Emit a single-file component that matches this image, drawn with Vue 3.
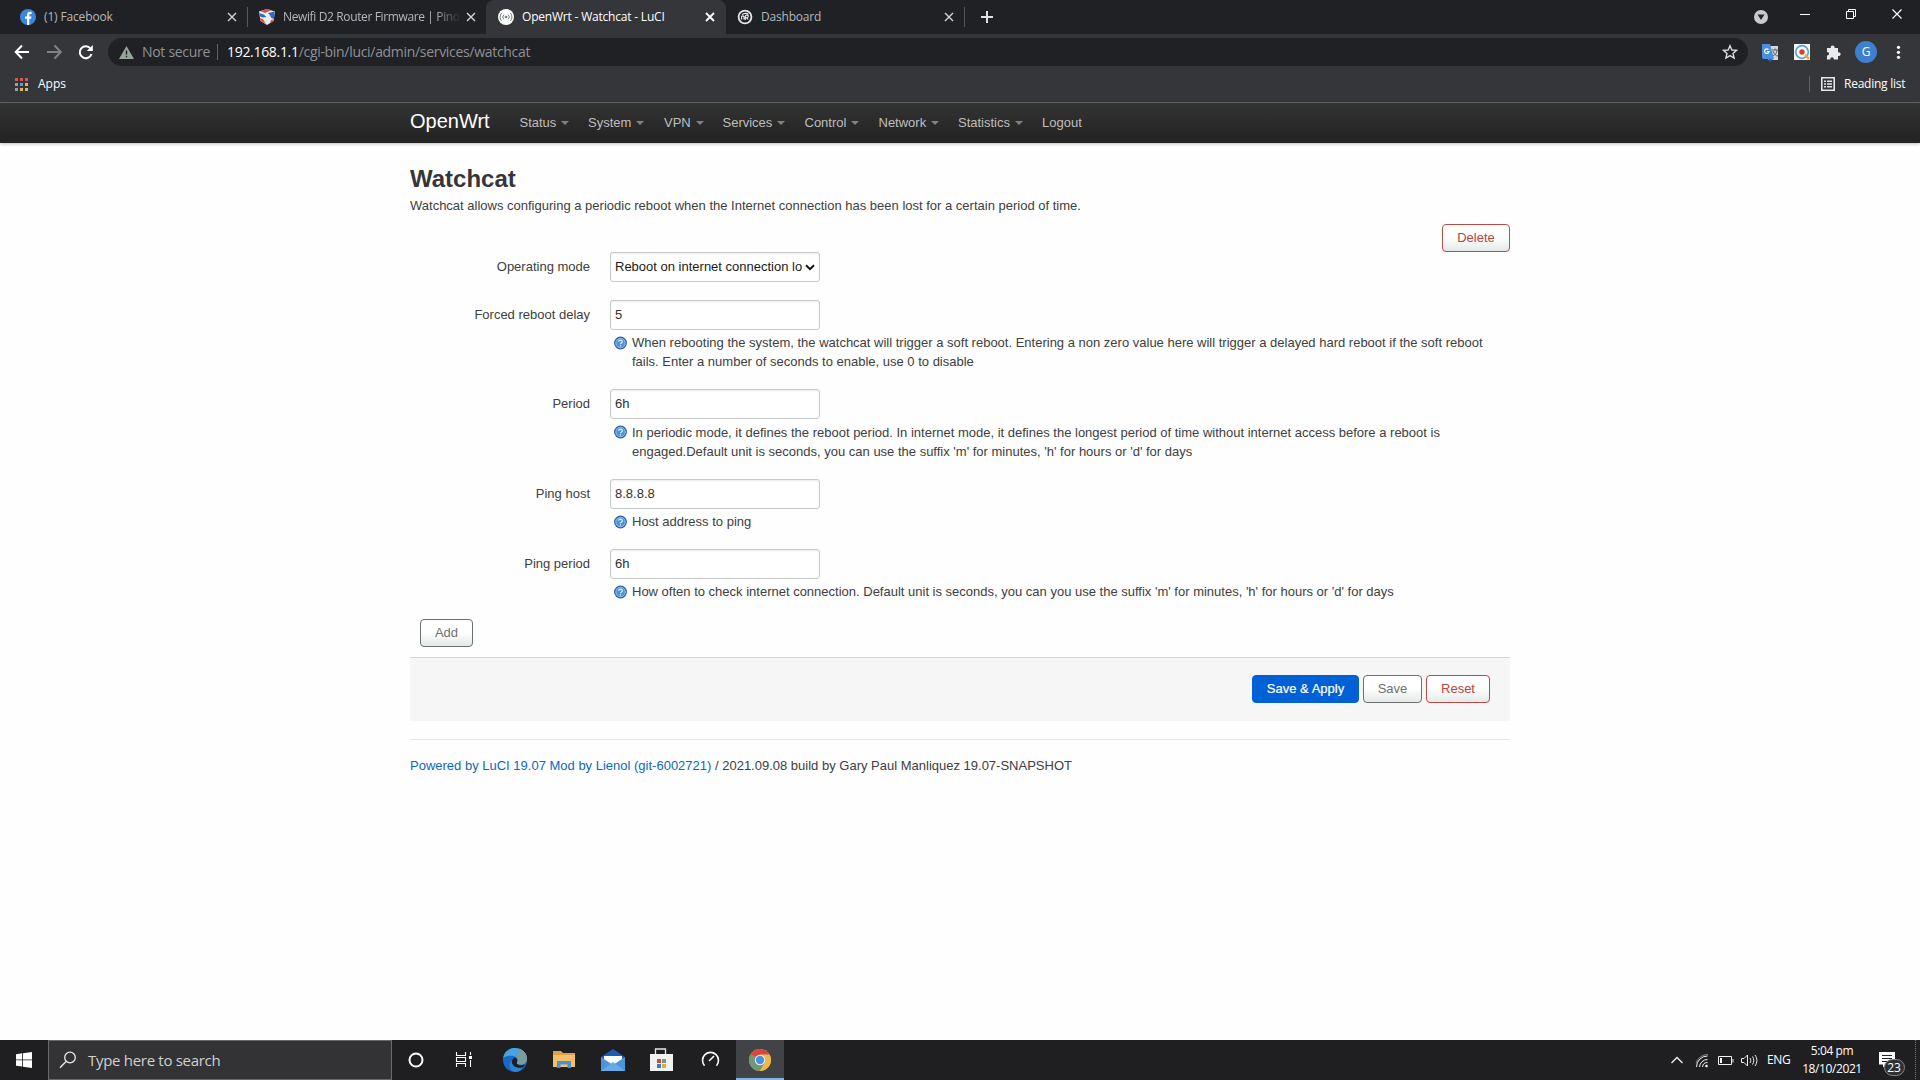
<script setup>
const nav = [
  { label: 'Status', width: 68.5 },
  { label: 'System', width: 76 },
  { label: 'VPN', width: 58.5 },
  { label: 'Services', width: 82 },
  { label: 'Control', width: 74 },
  { label: 'Network', width: 79.5 },
  { label: 'Statistics', width: 84 },
  { label: 'Logout', width: 60, plain: true },
]
const fields = [
  { label: 'Operating mode', value: 'Reboot on internet connection lo', select: true, help: [] },
  {
    label: 'Forced reboot delay', value: '5', help: [
      'When rebooting the system, the watchcat will trigger a soft reboot. Entering a non zero value here will trigger a delayed hard reboot if the soft reboot',
      'fails. Enter a number of seconds to enable, use 0 to disable'],
  },
  {
    label: 'Period', value: '6h', help: [
      'In periodic mode, it defines the reboot period. In internet mode, it defines the longest period of time without internet access before a reboot is',
      "engaged.Default unit is seconds, you can use the suffix 'm' for minutes, 'h' for hours or 'd' for days"],
  },
  { label: 'Ping host', value: '8.8.8.8', help: ['Host address to ping'] },
  {
    label: 'Ping period', value: '6h', help: [
      "How often to check internet connection. Default unit is seconds, you can you use the suffix 'm' for minutes, 'h' for hours or 'd' for days"],
  },
]
const appDots = ['#d8574e', '#d8574e', '#d8574e', '#9aa09c', '#5a9be0', '#e3b457', '#9aa09c', '#e3b457', '#e3b457']
</script>

<template>
  <div class="screen">
    <header class="chrome">
      <div class="tabs">
        <div class="tab t1">
          <svg class="fav" viewBox="0 0 16 16"><circle cx="8" cy="8" r="8" fill="#3b86e0" /><path d="M7 16V9.800H5V7.500h2V6c0-2.100 1.200-3.200 3-3.200l1.600.1v2h-1c-1 0-1.300.5-1.300 1.200v1.400h2.200l-.4 2.300H9.300V16z" fill="#fff" /></svg>
          <span class="tt s1">(1) Facebook</span>
          <svg class="x" viewBox="0 0 10 10"><path d="M1 1l8 8M9 1l-8 8" /></svg>
          <i class="sep"></i>
        </div>
        <div class="tab t2">
          <svg class="fav" viewBox="0 0 16 16"><path d="M0 2.500L8 0l8 2.500-1.500 9.500L8 16l-6.500-4z" fill="#eceef2" /><path d="M1.500 2.200L8 0l4 1.200L6 4z" fill="#d84c43" /><path d="M9 4l6.800-1.400L14.800 10l-2.600-1-1-2.500z" fill="#2f6ac6" /><path d="M.3 4l4.500 1.500L7.500 8 4 8.500l-3-1z" fill="#2f6ac6" /><path d="M1 9l3 1 3 5.300-5.500-3.300z" fill="#d8554c" /><path d="M12 11l2.300-.5-.5 2-2.800 1.700z" fill="#d8554c" /></svg>
          <span class="tt s2 fade">Newifi D2 Router Firmware | Pino</span>
          <svg class="x" viewBox="0 0 10 10"><path d="M1 1l8 8M9 1l-8 8" /></svg>
        </div>
        <div class="tab t3">
          <svg class="fav" viewBox="0 0 16 16"><circle cx="8" cy="8" r="8" fill="#fff" /><circle cx="8" cy="8" r="1.300" fill="#6d7f78" /><path d="M5.800 5.700a3.300 3.300 0 000 4.600M10.200 5.700a3.300 3.300 0 010 4.600M3.700 4a5.700 5.700 0 000 8M12.300 4a5.700 5.700 0 010 8" fill="none" stroke="#6d7f78" stroke-width="1" /></svg>
          <span class="tt s3">OpenWrt - Watchcat - LuCI</span>
          <svg class="x" viewBox="0 0 10 10"><path d="M1 1l8 8M9 1l-8 8" /></svg>
        </div>
        <div class="tab t4">
          <svg class="fav" viewBox="0 0 16 16"><circle cx="8" cy="8" r="6.400" fill="none" stroke="#e6e7e8" stroke-width="1.800" /><path d="M4.600 10.500V8c0-1.600 2.400-1.600 2.400 0v2.500M8.300 11V7.500c0-2 3.200-1.600 3 0-.2 1.200-1.500 1.300-2.500 1.200 1.500.3 2 .9 2.300 1.800M5 5.700C7 4 10 3.800 11.500 5.300" fill="none" stroke="#e6e7e8" stroke-width="1.200" /></svg>
          <span class="tt s4">Dashboard</span>
          <svg class="x" viewBox="0 0 10 10"><path d="M1 1l8 8M9 1l-8 8" /></svg>
          <i class="sep"></i>
        </div>
        <svg class="plus" viewBox="0 0 12 12"><path d="M6 0v12M0 6h12" stroke="#dfe1e5" stroke-width="2" /></svg>
        <svg class="winctl" viewBox="0 0 160 34">
          <circle cx="11" cy="17" r="7" fill="#c9cacc" /><path d="M7.500 14.500h7L11 20z" fill="#26272a" />
          <g fill="none" stroke="#fff"><path d="M50 14.500h10M96.500 11.500h7v7h-7zM98.500 11.500v-2h7v7h-2" /><path d="M142.500 9.500l9 9M151.500 9.500l-9 9" stroke-width="1.200" /></g>
        </svg>
      </div>

      <div class="toolbar">
        <svg class="navicons" viewBox="0 0 108 28" fill="none" stroke-width="2">
          <path d="M29 14H16M22 7.500L15.700 14l6.300 6.500" stroke="#fff" />
          <path d="M47 14h13M54.500 7.500l6.300 6.500-6.300 6.500" stroke="#808286" />
          <path d="M90.500 10.500A6 6 0 1091.500 16" stroke="#fff" /><path d="M92.800 7v6h-6z" fill="#fff" />
        </svg>
        <div class="omni">
          <svg class="warn" viewBox="0 0 15 13"><path d="M7.500 0L15 13H0z" fill="#94a697" /><path d="M7.500 4.500v4M7.500 9.800v1.500" stroke="#202124" stroke-width="1.400" /></svg>
          <span class="ns">Not secure</span><i class="osep"></i>
          <span class="url"><b>192.168.1.1</b>/cgi-bin/luci/admin/services/watchcat</span>
          <svg class="star" viewBox="0 0 16 16"><path d="M8 1.700l1.900 4.300 4.600.4-3.500 3 1.100 4.600L8 11.600 3.900 14 5 9.400l-3.500-3 4.600-.4z" fill="none" stroke="#dadce0" stroke-width="1.400" /></svg>
        </div>
        <svg class="exts" viewBox="0 0 172 28">
          <path d="M21 8h9v14H20z" fill="#d5d8da" /><path d="M14 6h8l4 15H16a2 2 0 01-2-2z" fill="#4a90e2" /><path d="M20 21h5l-3 3z" fill="#2d62b8" /><path d="M24 12h6M27 10.500V12M25 13c1 3 3 5 5 5M29 12c0 3-2 5-4 6" stroke="#5a6067" fill="none" /><path d="M20.500 11.500a2.300 2.300 0 10.600 2H19" stroke="#fff" stroke-width="1.200" fill="none" />
          <rect x="46" y="6" width="16" height="16" fill="#f6f8f9" /><circle cx="54" cy="14" r="6.300" fill="none" stroke="#5aa2dc" stroke-width="1.700" /><circle cx="54" cy="14" r="2.700" fill="#d8412f" /><path d="M57 17l4 4" stroke="#edaa3c" stroke-width="2.500" />
          <path d="M79 10h3.800c-.6-3 4-3.400 3.800 0H90v4.200c3.600-.2 3.600 4 0 3.800V21.500h-4.200c.2-3-3.700-3-3.500 0H79v-4c2.800 0 2.800-3.500 0-3.500z" fill="#e8eaed" />
          <circle cx="118" cy="14" r="11" fill="#3f7fd0" /><text x="118" y="18.200" text-anchor="middle" class="avatar">G</text>
          <g fill="#fff"><circle cx="150.500" cy="9.300" r="1.600" /><circle cx="150.500" cy="14.300" r="1.600" /><circle cx="150.500" cy="19.300" r="1.600" /></g>
        </svg>
      </div>

      <div class="bookmarks">
        <div class="apps"><i v-for="(c, i) in appDots" :key="i" :style="{ background: c }"></i></div>
        <span class="appst">Apps</span>
        <i class="rsep"></i>
        <svg class="rl" viewBox="0 0 14 14"><path d="M.8.8h12.400v12.400H.8z" fill="none" stroke="#e3e6e4" stroke-width="1.600" /><path d="M3 4.200h2M6 4.200h5M3 7h2M6 7h5M3 9.800h2M6 9.800h5" stroke="#e3e6e4" stroke-width="1.400" /></svg>
        <span class="rlt">Reading list</span>
      </div>
    </header>

    <nav class="lucinav">
      <span class="brand">OpenWrt</span>
      <span v-for="n in nav" :key="n.label" class="item" :style="{ width: n.width + 'px' }">{{ n.label }}<i v-if="!n.plain" class="caret"></i></span>
    </nav>

    <main class="page">
      <h2>Watchcat</h2>
      <p class="desc">Watchcat allows configuring a periodic reboot when the Internet connection has been lost for a certain period of time.</p>
      <div class="del"><button class="btn red w68">Delete</button></div>
      <div class="form">
        <div v-for="(f, i) in fields" :key="i" class="row" :class="'r' + i">
          <label>{{ f.label }}</label>
          <div class="ctl">
            <div class="inp"><span>{{ f.value }}</span>
              <svg v-if="f.select" viewBox="0 0 10 7"><path d="M1 1.200l4 4 4-4" fill="none" stroke="#111" stroke-width="2" /></svg>
            </div>
            <div v-if="f.help.length" class="help">
              <svg viewBox="0 0 14 14"><circle cx="7" cy="7" r="6.300" fill="#4d93d9" stroke="#2c5f9e" stroke-width="1.200" /><circle cx="7" cy="7" r="5" fill="none" stroke="#9fc9ee" stroke-width=".8" /><path d="M5 5.600C5 3.400 9 3.400 9 5.600 9 7 7 6.800 7 8.300M7 9.400v1.300" fill="none" stroke="#e6f2fc" stroke-width="1.200" /></svg>
              <div class="lines"><div v-for="l in f.help" :key="l" class="line">{{ l }}</div></div>
            </div>
          </div>
        </div>
      </div>
      <button class="btn gray w53 add">Add</button>
      <div class="actions">
        <button class="btn blue w107">Save &amp; Apply</button>
        <button class="btn gray w59">Save</button>
        <button class="btn red w64">Reset</button>
      </div>
      <footer><a>Powered by LuCI 19.07 Mod by Lienol (git-6002721)</a> / 2021.09.08 build by Gary Paul Manliquez 19.07-SNAPSHOT</footer>
    </main>

    <div class="taskbar">
      <svg class="start" viewBox="0 0 48 40"><path d="M16 14.200l6.200-.9v6.200H16zM23 13.200l9-1.200v7.500h-9zM16 20.300h6.200v6.300l-6.200-.9zM23 20.300h9V28l-9-1.200z" fill="#fff" /></svg>
      <div class="search">
        <svg viewBox="0 0 18 18"><circle cx="11" cy="6.500" r="5.300" fill="none" stroke="#e8e8e8" stroke-width="1.300" /><path d="M7 10.500L1 16.800" stroke="#e8e8e8" stroke-width="1.400" /></svg>
        <span>Type here to search</span>
      </div>
      <svg class="tasks" viewBox="0 0 344 40">
        <circle cx="24" cy="20" r="6.500" fill="none" stroke="#fff" stroke-width="2" />
        <g fill="none" stroke="#fff" stroke-width="1.100"><path d="M64.500 12v3.500h9V12M64.500 27v-3.500h9V27M64.500 17.500h9v4h-9zM78.500 12v3M78.500 20v7" /></g><path d="M77 16h3v3h-3z" fill="#fff" />
        <circle cx="123" cy="20" r="12" fill="#1769c7" /><path d="M111.200 18C112 11.500 117 8 123 8c7 0 12 5 12 10.500 0 4-3 6-6.500 6-2.500 0-4-.8-3.700-2 1.400-1.400 1.200-5-2.600-6.300-4-1.200-9 0-11 1.800z" fill="#4aa3df" /><path d="M129 9.600c4 2 6 5.400 6 8.900 0 4-3 6-6.500 6-2.500 0-4-.8-3.700-2 1.400-1.400 1.200-4 0-5.500 1-3 2-5 4.200-7.400z" fill="#7d9c99" /><path d="M124.800 22.500c-.6 2.500 4.500 4 8.200 1.800l-2 3.200c-7 2-12-2-11-6.500.5-2.300 2-3.200 3.500-3.500 2 1.200 2.300 3.600 1.300 5z" fill="#1f1f22" /><path d="M120 21c-.5 4 3 8 11 6.500-2 2.500-5 4.500-8 4.500-6-1.500-7.500-9-3-11z" fill="#2f83d6" />
        <path d="M161 11h8l2 2h12v14h-22z" fill="#e2a047" /><path d="M161 15h22v12h-22z" fill="#f3c06a" /><path d="M165 21h14v7h-3.500v-3.500h-7V28H165z" fill="#4a92d4" />
        <path d="M209 17l12-8 12 8v4h-24z" fill="#1c5cb8" /><path d="M212 16h18v8h-18z" fill="#fff" /><path d="M209 17l12 8 12-8v14h-24z" fill="#4a95dc" /><path d="M209 31l12-9 12 9z" fill="#67aae6" />
        <path d="M263.500 15v-6h10v6" fill="none" stroke="#e8e8e8" stroke-width="1.300" /><path d="M258 14h23v17h-23z" fill="#f0f1f1" /><path d="M265 19h4v4h-4z" fill="#c94a35" /><path d="M270 19h4v4h-4z" fill="#8c8f88" /><path d="M265 24h4v4h-4z" fill="#2d82c8" /><path d="M270 24h4v4h-4z" fill="#e6a83a" />
        <path d="M313.500 26.200a8 8 0 1112 0M318 21.500l5-5" fill="none" stroke="#fff" stroke-width="1.600" transform="translate(-1 -.5)" />
      </svg>
      <div class="chrometile">
        <svg viewBox="0 0 22 22"><circle cx="11" cy="11" r="11" fill="#efb64c" /><path d="M11 11L1.500 5.500A11 11 0 0120.500 5.500H11z" fill="#d8463c" /><path d="M1.500 5.500A11 11 0 0011 22l5-8.300L11 11z" fill="#6f9878" /><path d="M20.500 5.500A11 11 0 0111 22l4.800-8.200z" fill="#efb64c" /><circle cx="11" cy="11" r="5.200" fill="#f4f4f4" /><circle cx="11" cy="11" r="4.200" fill="#4a8fe2" /></svg>
      </div>
      <svg class="tray" viewBox="0 0 97 40" fill="none" stroke="#f0f0f0">
        <path d="M3.500 23l5.500-5.500 5.500 5.500" stroke-width="1.300" />
        <path d="M28.500 27a11 11 0 0111-11M31.500 27a8 8 0 018-7.500M34.500 27a5 5 0 015-4.500" /><path d="M28 23a13 13 0 0112-8.500" stroke="#888" /><circle cx="38.500" cy="26" r="1.300" fill="#fff" stroke="none" />
        <path d="M50.500 16.500h13v8h-13zM65 19v3.500" /><path d="M52 18h2v5h-2z" fill="#fff" stroke="none" />
        <path d="M73.500 18.500h2.500l3.500-3.500v11L76 22.500h-2.500zM82 18c1 1.500 1 3.500 0 5M84.500 16.500c1.700 2.500 1.700 5.500 0 8M87 15c2.500 3.500 2.500 7.500 0 11" />
      </svg>
      <span class="eng">ENG</span>
      <div class="clock"><span>5:04 pm</span><span>18/10/2021</span></div>
      <svg class="note" viewBox="0 0 48 40">
        <path d="M7 12h16v12.500h-9l-3 3v-3H7z" fill="#fff" /><path d="M10 15.500h10M10 18.500h10M10 21.500h6" stroke="#202124" stroke-width="1.200" />
        <rect x="12.500" y="19.500" width="20" height="16" rx="8" fill="#303033" stroke="#85868a" /><text x="22" y="31.500" text-anchor="middle" class="badge">23</text>
        <path d="M43.500 0v40" stroke="#77787b" stroke-dasharray="1 1" />
      </svg>
    </div>
  </div>
</template>

<style>
body { background: #fefefe; overflow: hidden; }
</style>

<style scoped>
.screen { width: 1920px; height: 1080px; display: flex; flex-direction: column; background: #fefefe; font: 13px/19px "Liberation Sans", Arial, sans-serif; color: #404040; overflow: hidden; }
svg { display: block; flex: none; }
i { display: block; flex: none; }
span { white-space: nowrap; }
.chrome, .taskbar { font-family: "Open Sans", "Noto Sans", sans-serif; }
.chrome { height: 102px; background: #35363a; border-bottom: 1px solid #626366; flex: none; }
.tabs { height: 34px; background: #202124; display: flex; align-items: center; font-size: 12px; color: #b4b7bc; }
.tab { height: 34px; display: flex; align-items: center; box-sizing: border-box; }
.t1 { width: 248px; padding-left: 20px; }
.t2 { width: 238px; padding-left: 11px; }
.t3 { width: 240px; padding-left: 12px; background: #35363a; border-radius: 8px 8px 0 0; color: #fff; }
.t4 { width: 239px; padding-left: 11px; }
.fav { width: 16px; height: 16px; margin-right: 8px; }
.tt { line-height: 18px; }
.t1 .tt { width: 183px; }
.t2 .tt { width: 176px; }
.t3 .tt { width: 183px; }
.t4 .tt { width: 184px; }
.t2 .x { margin-left: 7px; }
.s1 { letter-spacing: -.15px; }
.s2 { letter-spacing: -.37px; }
.s3 { letter-spacing: -.2px; }
.s4 { letter-spacing: -.2px; }
.fade { -webkit-mask-image: linear-gradient(90deg, #000 86%, rgba(0,0,0,.15) 99%); mask-image: linear-gradient(90deg, #000 86%, rgba(0,0,0,.15) 99%); }
.x { width: 10px; height: 10px; }
.x path { stroke: #d2d4d7; stroke-width: 1.400; }
.t3 .x path { stroke: #fff; stroke-width: 1.800; }
.sep { width: 1px; height: 20px; background: #55565a; margin-left: 10px; }
.plus { width: 12px; height: 12px; margin-left: 16px; }
.winctl { width: 160px; height: 34px; margin-left: auto; margin-right: 10px; }
.toolbar { height: 28px; margin-top: 4px; display: flex; }
.navicons { width: 108px; height: 28px; }
.omni { width: 1640px; height: 28px; border-radius: 14px; background: #202124; display: flex; align-items: center; font-size: 14px; color: #8e9195; box-sizing: border-box; padding-left: 11px; }
.warn { width: 15px; height: 13px; margin-right: 8px; }
.ns { width: 75px; letter-spacing: -.3px; margin-top: -1px; }
.osep { width: 1px; height: 16px; background: #606266; margin-right: 9px; }
.url { letter-spacing: -.31px; margin-top: -1px; }
.url b { color: #fff; font-weight: 400; }
.star { width: 16px; height: 16px; margin-left: auto; margin-right: 10px; }
.exts { width: 172px; height: 28px; }
.avatar { font: 12px "Open Sans", sans-serif; fill: #fff; }
.bookmarks { height: 36px; display: flex; align-items: center; font-size: 12px; color: #fff; padding-left: 15px; }
.appst, .rlt { margin-top: -1px; }
.apps { display: grid; grid-template-columns: repeat(3, 3px); gap: 2px; width: 13px; margin-right: 10px; }
.apps i { height: 3px; }
.rsep { width: 1px; height: 16px; background: #606266; margin-left: auto; margin-right: 11px; }
.rl { width: 14px; height: 14px; margin-right: 9px; }
.rlt { width: 76px; letter-spacing: -.25px; }
.lucinav { height: 40px; flex: none; display: flex; align-items: center; padding-left: 410px; background: linear-gradient(#333, #222); box-shadow: 0 1px 3px rgba(0,0,0,.25); color: #bfbfbf; }
.brand { font-size: 20px; color: #fff; width: 109.500px; margin-top: -3px; }
.item { display: flex; align-items: center; font-size: 13px; flex: none; margin-top: -2px; }
.caret { border: 4px solid transparent; border-top-color: #7d837f; border-bottom: 0; margin-left: 5px; margin-top: 2px; }
.page { width: 1100px; margin-left: 410px; flex: 1; }
h2 { font-size: 24px; line-height: 36px; margin: 18px 0 0; color: #363638; }
.desc { margin: -1px 0 0; height: 28px; }
.del { display: flex; justify-content: flex-end; height: 28px; }
.btn { height: 28px; box-sizing: border-box; border-radius: 4px; border: 1px solid; padding: 0; font: 13px/18px "Liberation Sans", Arial, sans-serif; background: linear-gradient(#fff 25%, #fdfefe 50%, #e4e9e8); flex: none; }
.red { color: #b8443c; border-color: #bd4a43; }
.gray { color: #707070; border-color: #6c7070; }
.blue { color: #fff; background: #0060d6; border-color: #0060d6; -webkit-text-stroke: .2px #fff; }
.w68 { width: 68px; } .w53 { width: 53px; } .w107 { width: 107px; } .w59 { width: 59px; } .w64 { width: 64px; }
.row { display: flex; }
.r0 { height: 48px; } .r1 { height: 89px; } .r2 { height: 90px; } .r3 { height: 70px; } .r4 { height: 70px; }
.row label { width: 180px; text-align: right; margin-right: 20px; line-height: 29px; }
.inp { width: 210px; height: 30px; box-sizing: border-box; border: 1px solid #c6cac8; border-radius: 3px; background: #fff; box-shadow: inset 0 1px 2px rgba(0,0,0,.08); padding: 0 4px; display: flex; align-items: center; color: #303030; line-height: 28px; }
.r0 .inp span { color: #1a1a1a; flex: 0 0 187px; }
.inp svg { width: 10px; height: 7px; margin-left: 3px; }
.help { display: flex; padding: 3px 0 0 4px; }
.help svg { width: 13px; height: 14px; margin: 3px 5px 0 0; }
.r2 .lines { padding-top: 1px; }
.line { white-space: nowrap; height: 19px; line-height: 20px; }
.add { display: block; margin: 0 0 0 10px; }
.actions { margin-top: 10px; height: 64px; box-sizing: border-box; border-top: 1px solid #d3d8d5; background: #f5f6f5; display: flex; justify-content: flex-end; gap: 4px; padding: 17px 20px 0 0; }
footer { margin-top: 18px; border-top: 1px solid #e4e8e6; padding-top: 16px; white-space: nowrap; }
footer a { color: #0b69c0; }
.taskbar { height: 40px; flex: none; background: #1f1f22; display: flex; color: #fff; }
.start { width: 48px; height: 40px; }
.search { width: 344px; box-sizing: border-box; border: 1px solid #6a6a6b; background: #333335; display: flex; align-items: center; padding-left: 10px; font-size: 15px; color: #d0d0d0; }
.search svg { width: 18px; height: 18px; margin-right: 11px; }
.search span { letter-spacing: -.3px; }
.tasks { width: 344px; height: 40px; }
.chrometile { width: 48px; height: 40px; box-sizing: border-box; background: #424347; border-bottom: 2px solid #7db7ec; display: flex; justify-content: center; align-items: center; padding-top: 1px; }
.chrometile svg { width: 22px; height: 22px; }
.tray { width: 97px; height: 40px; margin-left: auto; }
.eng { width: 31px; margin-left: 2px; margin-right: 1px; font-size: 12px; line-height: 40px; letter-spacing: -.3px; }
.clock { width: 66px; display: flex; flex-direction: column; align-items: center; font-size: 12px; line-height: 18px; padding-top: 2px; letter-spacing: -.4px; margin-right: 7px; }
.note { width: 48px; height: 40px; }
.badge { font: 12px "Open Sans", sans-serif; fill: #fff; }
</style>
